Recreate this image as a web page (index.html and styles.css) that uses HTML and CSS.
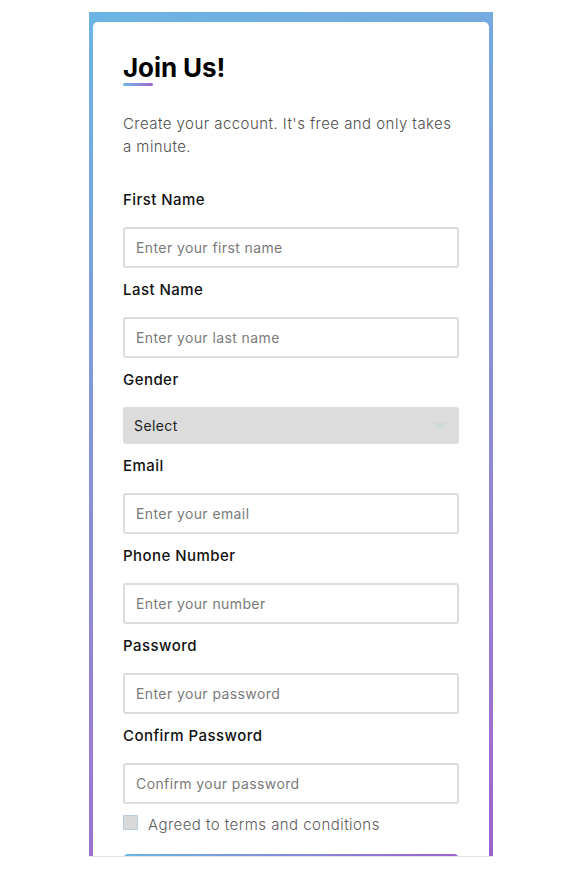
FILE: index.html
```html
<!DOCTYPE html>
<html lang="en">
<head>
<meta charset="utf-8">
<title>Join Us</title>
<link rel="stylesheet" href="styles.css">
</head>
<body>
<div class="frame">
  <form class="card">
    <h1 class="title">Join Us!</h1>
    <div class="title-bar"></div>
    <p class="lead">Create your account. It's free and only takes a minute.</p>

    <label class="label" for="fn">First Name</label>
    <input class="field" id="fn" type="text" placeholder="Enter your first name">

    <label class="label" for="ln">Last Name</label>
    <input class="field" id="ln" type="text" placeholder="Enter your last name">

    <label class="label" for="gender">Gender</label>
    <div class="select" id="gender">
      <span class="select-text">Select</span>
      <span class="select-arrow"></span>
    </div>

    <label class="label" for="em">Email</label>
    <input class="field" id="em" type="text" placeholder="Enter your email">

    <label class="label" for="ph">Phone Number</label>
    <input class="field" id="ph" type="text" placeholder="Enter your number">

    <label class="label" for="pw">Password</label>
    <input class="field" id="pw" type="password" placeholder="Enter your password">

    <label class="label" for="cpw">Confirm Password</label>
    <input class="field" id="cpw" type="password" placeholder="Confirm your password">

    <div class="agree">
      <span class="box"></span>
      <span class="agree-text">Agreed to terms and conditions</span>
    </div>

    <button class="submit" type="button" aria-label="Register"></button>
  </form>
</div>
</body>
</html>
```
FILE: styles.css
```css
* { box-sizing: border-box; }

html, body {
  margin: 0;
  padding: 0;
  background: #fff;
}

body {
  font-family: Inter, "Liberation Sans", sans-serif;
  color: #1a1a1a;
}

.frame {
  width: 404px;
  height: 845px;
  margin: 12px auto 0;
  padding: 10px 4px 0;
  background: linear-gradient(160deg, #6cb5e5 0%, #7f9bd9 35%, #9a7ed0 75%, #9d63cd 100%);
  border-bottom: 1px solid #e4e4e4;
  overflow: hidden;
}

.card {
  display: block;
  min-height: 100%;
  background: #fff;
  border-radius: 5px 5px 0 0;
  padding: 30px 30px 0;
}

.title {
  margin: 0;
  font-size: 26px;
  line-height: 31px;
  font-weight: 700;
  letter-spacing: -0.1px;
  color: #000;
}

.title-bar {
  width: 30px;
  height: 3px;
  border-radius: 2px;
  background: linear-gradient(90deg, #74b6e4, #a066cf);
}

.lead {
  margin: 26px 0 31px;
  font-size: 15px;
  line-height: 23px;
  font-weight: 300;
  letter-spacing: 0.45px;
  color: #4f4f4f;
}

.label {
  display: block;
  margin: 0 0 16px;
  font-size: 15px;
  line-height: 22px;
  font-weight: 500;
  letter-spacing: 0.45px;
  color: #111;
}

.field {
  display: block;
  width: 100%;
  height: 41px;
  margin: 0 0 11px;
  padding: 0 11px;
  border: 2px solid #dcdcdc;
  border-radius: 3px;
  font-family: inherit;
  font-size: 14px;
  letter-spacing: 0.4px;
  color: #222;
  background: #fff;
  outline: none;
}

.field::placeholder {
  color: #7a7a7a;
}

.select {
  display: flex;
  align-items: center;
  justify-content: space-between;
  height: 37px;
  margin: 0 0 11px;
  padding: 0 13px 0 11px;
  background: #dcdcdc;
  border-radius: 3px;
}

.select-text {
  font-size: 14px;
  letter-spacing: 0.4px;
  color: #1e1e1e;
}

.select-arrow {
  width: 0;
  height: 0;
  border-left: 6px solid transparent;
  border-right: 6px solid transparent;
  border-top: 6px solid #cfd8d8;
}

.agree {
  display: flex;
  align-items: flex-start;
  gap: 10px;
  margin-top: 1px;
}

.box {
  width: 15px;
  height: 15px;
  flex: none;
  background: #d9d9d9;
  border: 1px solid #b9cbd9;
  border-radius: 1px;
}

.agree-text {
  font-size: 15px;
  line-height: 22px;
  font-weight: 300;
  letter-spacing: 0.45px;
  color: #5c5c5c;
  margin-top: -1px;
}

.submit {
  display: block;
  width: 100%;
  height: 44px;
  margin-top: 18px;
  border: 0;
  border-radius: 5px;
  background: linear-gradient(90deg, #6ab6e6, #9d62cd);
}
```
